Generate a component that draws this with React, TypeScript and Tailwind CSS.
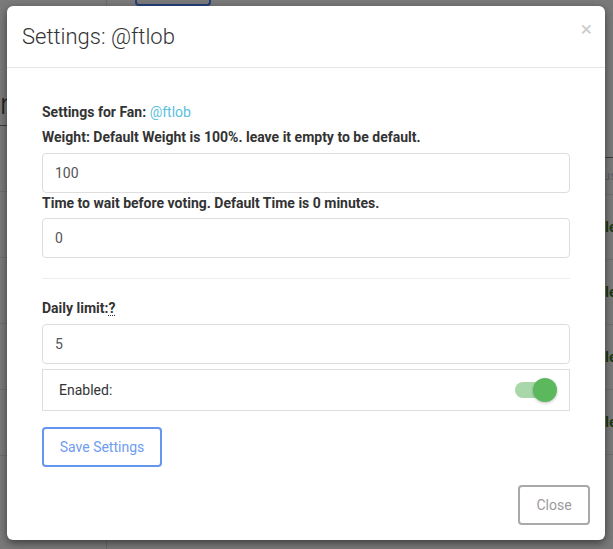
import React from "react";

function Field({ value }: { value: string }) {
  return (
    <div className="h-[40px] w-full rounded-[4px] border border-[#dddddd] bg-white px-[12px] flex items-center text-[14px] text-[#555555]">
      {value}
    </div>
  );
}

export default function App() {
  return (
    <div
      className="relative h-[549px] w-[613px] overflow-hidden bg-[#7a7a7a]"
      style={{ fontFamily: "Roboto, 'Liberation Sans', sans-serif" }}
    >
      {/* dimmed page behind */}
      <div className="flex h-full w-full">
        <div className="w-[107px] border-r border-[#6c6c6c] flex flex-col">
          <div className="h-[126px] border-b border-[#3c3c3c] flex items-end pb-[6px]">
            <span className="text-[30px] leading-none text-[#1e1e1e] font-light">n</span>
          </div>
          {[0, 1, 2, 3, 4].map((i) => (
            <div key={i} className="h-[66px] border-b border-[#6e6e6e]" />
          ))}
        </div>
        <div className="flex-1 flex flex-col">
          <div className="ml-[28px] h-[8px] w-[76px] -mt-[2px] rounded-b-[4px] border-2 border-t-0 border-[#27407a]" />
          <div className="h-[152px] border-b border-[#3c3c3c]" />
          <div className="h-[37px] border-b border-[#6e6e6e] flex items-center justify-end">
            <span className="text-[13px] text-[#606060] -mr-[4px]">us</span>
          </div>
          {[0, 1, 2, 3].map((i) => (
            <div key={i} className="h-[65px] border-b border-[#6e6e6e] flex items-center justify-end">
              <span className="text-[15px] font-bold text-[#1d3a12] -mr-[4px]">le</span>
            </div>
          ))}
        </div>
      </div>

      {/* modal */}
      <div className="absolute left-[7px] top-[6px] w-[598px] h-[534px] rounded-[6px] bg-white shadow-[0_3px_9px_rgba(0,0,0,0.5)] flex flex-col">
        <div className="h-[62px] shrink-0 border-b border-[#e5e5e5] pl-[15px] pr-[15px] flex items-center justify-between">
          <h4 className="text-[22px] font-light text-[#333333] leading-none">Settings: @ftlob</h4>
          <span className="text-[21px] leading-none text-[#cccccc] -mt-[14px] mr-[-2px]">×</span>
        </div>
        <div className="flex-1 px-[35px] pt-[34px]">
          <div className="text-[14px] leading-[20px] font-bold text-[#333333]">
            Settings for Fan: <span className="font-normal text-[#5bc0de]">@ftlob</span>
          </div>
          <div className="mt-[5px] mb-[6px] text-[14px] leading-[20px] font-bold text-[#333333]">
            Weight: Default Weight is 100%. leave it empty to be default.
          </div>
          <Field value="100" />
          <div className="mb-[5px] text-[14px] leading-[20px] font-bold text-[#333333]">
            Time to wait before voting. Default Time is 0 minutes.
          </div>
          <Field value="0" />
          <div className="mt-[20px] mb-[19px] h-px bg-[#eeeeee]" />
          <div className="mb-[6px] text-[14px] leading-[20px] font-bold text-[#333333]">
            Daily limit:
            <abbr className="no-underline border-b border-dotted border-[#333333] cursor-help leading-[14px] inline-block" title="">
              ?
            </abbr>
          </div>
          <Field value="5" />
          <div className="mt-[5px] h-[42px] border border-[#dddddd] flex items-center justify-between pl-[16px] pr-[12px]">
            <span className="text-[14px] text-[#333333]">Enabled:</span>
            <div className="relative w-[44px] h-[24px] flex items-center">
              <div className="ml-[2px] h-[16px] w-[34px] rounded-full bg-[#a8d8a9]" />
              <div className="absolute right-0 top-0 h-[24px] w-[24px] rounded-full bg-[#5cb85c] shadow-[0_1px_3px_rgba(0,0,0,0.25)]" />
            </div>
          </div>
          <button className="mt-[16px] h-[40px] w-[120px] rounded-[4px] border-2 border-[#6496f0] bg-white text-[14px] text-[#6f9cf0]">
            Save Settings
          </button>
        </div>
        <div className="flex justify-end px-[15px] pb-[15px]">
          <button className="h-[40px] w-[72px] rounded-[4px] border-2 border-[#a9a9a9] bg-white text-[14px] text-[#9a9a9a]">
            Close
          </button>
        </div>
      </div>
    </div>
  );
}
